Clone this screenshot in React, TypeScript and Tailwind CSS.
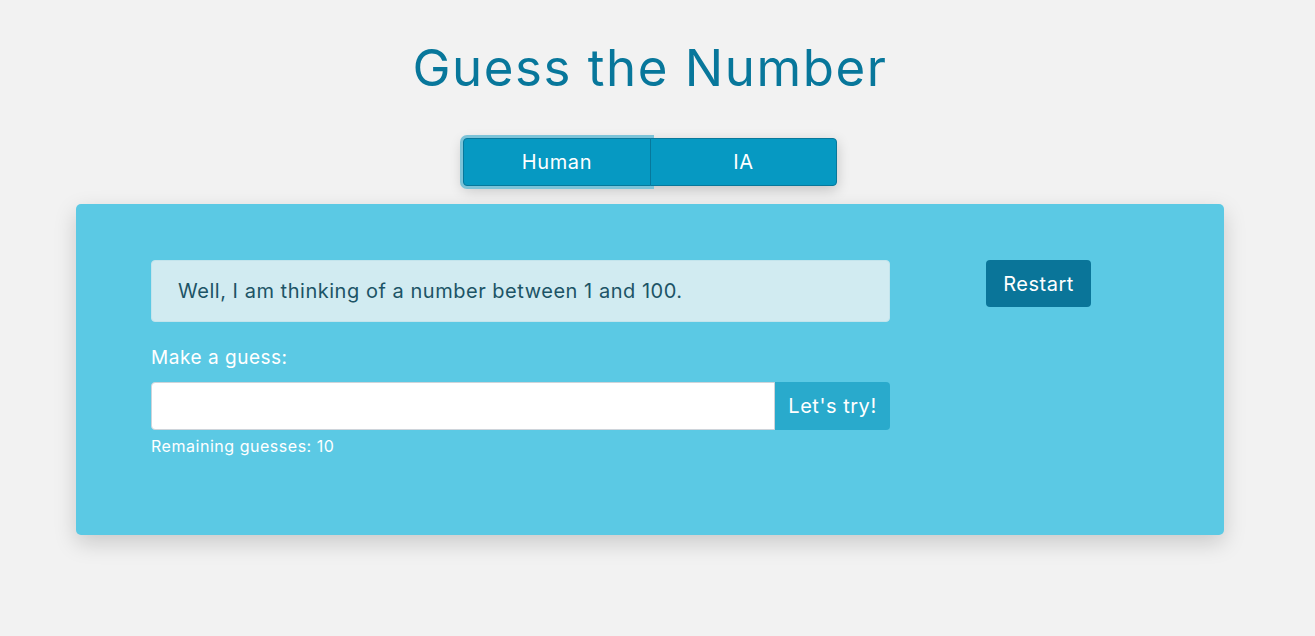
import { useState } from 'react';

export default function App() {
  const [mode, setMode] = useState<'human' | 'ia'>('human');
  const [guess, setGuess] = useState('');

  return (
    <div className="min-h-screen bg-[#f2f2f2] font-['Inter',sans-serif]">
      <div className="w-[1300px] pb-[100px]">
        <h1 className="pt-[36px] text-center text-[51px] leading-[64px] font-normal tracking-[0.03em] text-[#08779b]">
          Guess the Number
        </h1>

        <div className="mt-[38px] flex justify-center">
          <div className="flex rounded-[4px] shadow-[0_4px_14px_rgba(0,0,0,0.2)]">
            <button
              type="button"
              onClick={() => setMode('human')}
              className={`h-[48px] w-[188px] rounded-l-[4px] border border-[#07789b] bg-[#0699c2] text-[20px] tracking-[0.03em] text-white ${mode === 'human' ? 'ring-[3px] ring-[#7cc3d8]' : ''}`}
            >
              Human
            </button>
            <button
              type="button"
              onClick={() => setMode('ia')}
              className={`-ml-px h-[48px] w-[187px] rounded-r-[4px] border border-[#07789b] bg-[#0699c2] text-[20px] tracking-[0.03em] text-white ${mode === 'ia' ? 'ring-[3px] ring-[#7cc3d8]' : ''}`}
            >
              IA
            </button>
          </div>
        </div>

        <div className="mx-[76px] mt-[18px] flex h-[331px] rounded-[5px] bg-[#5bc9e4] px-[75px] pt-[56px] tracking-[0.033em] shadow-[0_8px_22px_rgba(0,0,0,0.17)]">
          <div className="w-[739px]">
            <div className="flex h-[62px] items-center rounded-[4px] border border-[#c3e4ec] bg-[#d1ebf1] px-[26px] text-[20px] text-[#1c5466]">
              Well, I am thinking of a number between 1 and 100.
            </div>
            <label htmlFor="guess" className="mt-[22px] block text-[19px] leading-[28px] text-white">
              Make a guess:
            </label>
            <div className="mt-[10px] flex h-[48px]">
              <input
                id="guess"
                type="number"
                value={guess}
                onChange={(e) => setGuess(e.target.value)}
                className="h-full flex-1 rounded-l-[4px] border border-[#ced4da] bg-white px-3 text-[20px] text-[#495057] outline-none"
              />
              <button type="button" className="h-full w-[115px] rounded-r-[4px] bg-[#29aacc] text-[20px] text-white">
                Let's try!
              </button>
            </div>
            <p className="mt-[6px] text-[16px] leading-[20px] text-white">Remaining guesses: 10</p>
          </div>
          <div className="ml-[96px]">
            <button
              type="button"
              onClick={() => setGuess('')}
              className="h-[47px] w-[105px] rounded-[4px] bg-[#0a7599] text-[20px] text-white"
            >
              Restart
            </button>
          </div>
        </div>
      </div>
    </div>
  );
}
